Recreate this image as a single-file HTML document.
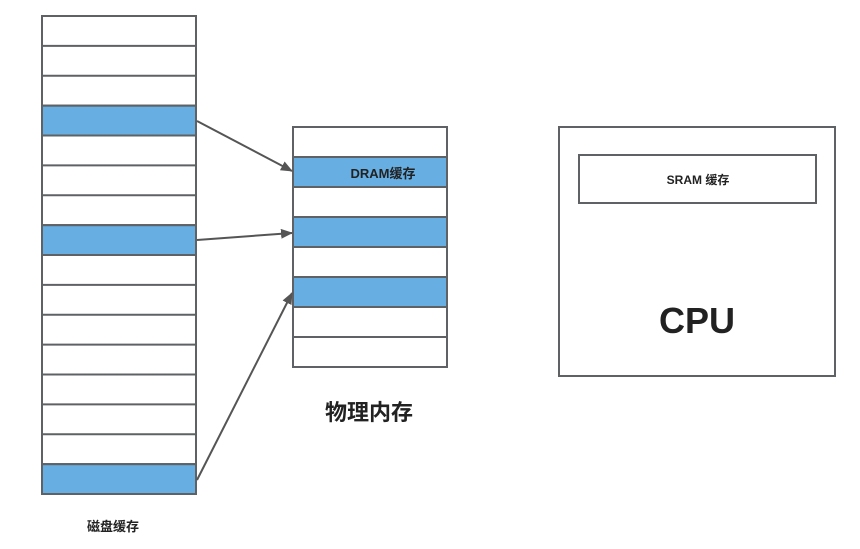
<!DOCTYPE html>
<html><head><style>body{margin:0;background:#fff;width:860px;height:544px;overflow:hidden}</style></head>
<body>
<svg width="860" height="544" xmlns="http://www.w3.org/2000/svg" font-family="'Liberation Sans','Noto Sans CJK SC',sans-serif" font-weight="bold" fill="#222">
<defs><marker id="a" markerWidth="12" markerHeight="10" refX="11" refY="5" orient="auto" markerUnits="userSpaceOnUse"><path d="M0,0 L12,5 L0,10 Z" fill="#555"/></marker></defs>
<g stroke="#5f6264" stroke-width="2">
<rect x="42" y="16" width="154" height="478" fill="#fff"/>
<rect x="42" y="105.6" width="154" height="29.9" fill="#67aee2"/>
<rect x="42" y="225.1" width="154" height="29.9" fill="#67aee2"/>
<rect x="42" y="464.1" width="154" height="29.9" fill="#67aee2"/>
<path d="M42 45.9H196M42 75.75H196M42 105.6H196M42 135.5H196M42 165.4H196M42 195.25H196M42 225.1H196M42 255H196M42 284.9H196M42 314.75H196M42 344.6H196M42 374.5H196M42 404.4H196M42 434.25H196M42 464.1H196" fill="none"/>
<rect x="293" y="127" width="154" height="240" fill="#fff"/>
<rect x="293" y="157" width="154" height="30" fill="#67aee2"/>
<rect x="293" y="217" width="154" height="30" fill="#67aee2"/>
<rect x="293" y="277" width="154" height="30" fill="#67aee2"/>
<path d="M293 157H447M293 187H447M293 217H447M293 247H447M293 277H447M293 307H447M293 337H447" fill="none"/>
<rect x="559" y="127" width="276" height="249" fill="#fff"/>
<rect x="579" y="155" width="237" height="48" fill="#fff"/>
</g>
<g stroke="#555" stroke-width="2" fill="none">
<line x1="197" y1="121" x2="292" y2="171" marker-end="url(#a)"/>
<line x1="197" y1="240" x2="292" y2="233" marker-end="url(#a)"/>
<line x1="197" y1="480" x2="292" y2="293" marker-end="url(#a)"/>
</g>
<text x="383" y="178" font-size="13" text-anchor="middle">DRAM缓存</text>
<text x="698" y="184" font-size="12" text-anchor="middle">SRAM 缓存</text>
<text x="697" y="333" font-size="36" text-anchor="middle">CPU</text>
<text x="369" y="420" font-size="22" text-anchor="middle">物理内存</text>
<text x="113" y="531" font-size="13" text-anchor="middle">磁盘缓存</text>
</svg>
</body></html>
